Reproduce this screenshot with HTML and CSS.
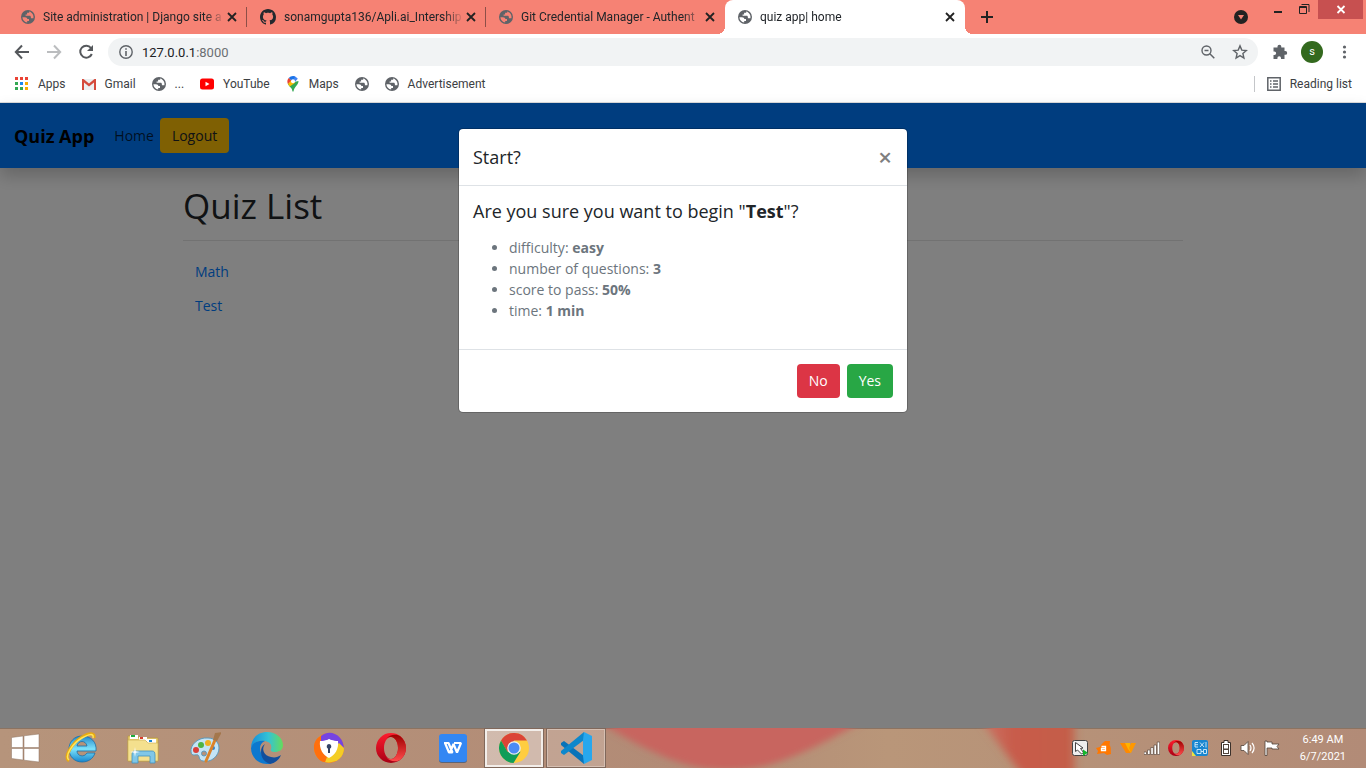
FILE: index.html
```html
<!DOCTYPE html>
<html lang="en">
<head>
<meta charset="utf-8">
<title>quiz app| home</title>
<link rel="stylesheet" href="styles.css">
</head>
<body>
<svg class="defs" aria-hidden="true">
  <symbol id="globe" viewBox="0 0 14 14">
    <path fill="#5f6368" fill-rule="evenodd" d="M7 0a7 7 0 1 0 0 14A7 7 0 0 0 7 0zM1.400 7.200h2.600c1.500 0 2.300.700 2.300 1.900h1.700V11H6.200v1.500C3.600 12.200 1.500 9.900 1.400 7.200zM8.200 1.500v1.300H6.100v1.700H4.600v1.300h4c.900 0 1.300.700 1.300 1.500v1h2.500C13.100 5.200 11 2.200 8.200 1.500z"/>
  </symbol>
  <symbol id="close" viewBox="0 0 14 14">
    <path d="M3 3l8 8M11 3l-8 8" fill="none" stroke="currentColor" stroke-width="1.800"/>
  </symbol>
  <symbol id="opera" viewBox="0 0 30 30">
    <defs>
      <linearGradient id="operaOuter" x1="0" x2="0" y1="0" y2="1"><stop offset="0" stop-color="#ff1b2d"/><stop offset="1" stop-color="#a70014"/></linearGradient>
      <linearGradient id="operaInner" x1="0" x2="0" y1="0" y2="1"><stop offset="0" stop-color="#9c0000"/><stop offset="1" stop-color="#ff4b4b"/></linearGradient>
    </defs>
    <path fill="url(#operaOuter)" fill-rule="evenodd" d="M15 0a15 15 0 1 0 0 30a15 15 0 0 0 0-30zM15 4c4 0 7 5 7 11s-3 11-7 11s-7-5-7-11s3-11 7-11z"/>
    <path fill="url(#operaInner)" d="M10 6c4-5 10-5 14-3c8 6 8 18 0 24c-4 2-10 2-14-3c2 2 4 2 5 2c4 0 7-5 7-11S19 4 15 4c-1 0-3 0-5 2z"/>
  </symbol>
</svg>

<header class="browser">
  <div class="tabstrip">
    <div class="tab">
      <svg class="icon14"><use href="#globe"/></svg>
      <span class="tab-title">Site administration | Django site a</span>
      <button class="tab-close" aria-label="Close tab"><svg class="icon14"><use href="#close"/></svg></button>
    </div>
    <div class="tab">
      <svg class="icon16" viewBox="0 0 16 16"><path fill="#24292e" d="M8 0C3.580 0 0 3.580 0 8c0 3.540 2.290 6.530 5.470 7.590.400.070.550-.170.550-.380 0-.190-.010-.820-.010-1.490-2.010.370-2.530-.490-2.690-.940-.090-.230-.480-.940-.820-1.130-.280-.150-.680-.520-.010-.530.630-.010 1.080.580 1.230.820.720 1.210 1.870.870 2.330.660.070-.520.280-.870.510-1.070-1.780-.200-3.640-.890-3.640-3.950 0-.870.310-1.590.820-2.150-.080-.200-.360-1.020.080-2.120 0 0 .670-.210 2.200.820.640-.180 1.320-.270 2-.270s1.360.090 2 .270c1.530-1.040 2.200-.820 2.200-.820.440 1.100.160 1.920.080 2.120.510.560.820 1.270.820 2.150 0 3.070-1.870 3.750-3.650 3.950.290.250.540.730.540 1.480 0 1.070-.010 1.930-.010 2.200 0 .210.150.460.550.380A8.010 8.010 0 0 0 16 8c0-4.420-3.580-8-8-8z"/></svg>
      <span class="tab-title">sonamgupta136/Apli.ai_Intership</span>
      <button class="tab-close" aria-label="Close tab"><svg class="icon14"><use href="#close"/></svg></button>
    </div>
    <div class="tab tab-last">
      <svg class="icon14"><use href="#globe"/></svg>
      <span class="tab-title">Git Credential Manager - Authent</span>
      <button class="tab-close" aria-label="Close tab"><svg class="icon14"><use href="#close"/></svg></button>
    </div>
    <div class="tab tab-active">
      <svg class="icon14"><use href="#globe"/></svg>
      <span class="tab-title">quiz app| home</span>
      <button class="tab-close" aria-label="Close tab"><svg class="icon14"><use href="#close"/></svg></button>
    </div>
    <button class="new-tab" aria-label="New tab"><svg class="icon14" viewBox="0 0 14 14"><path d="M7 1v12M1 7h12" stroke="#222" stroke-width="2"/></svg></button>
    <div class="window-controls">
      <button class="tab-search" aria-label="Search tabs"><svg class="icon14" viewBox="0 0 14 14"><circle cx="7" cy="7" r="7" fill="#222"/><path fill="#f68274" d="M4 5h6L7 9.500z"/></svg></button>
      <button class="win" aria-label="Minimize"><svg class="icon14" viewBox="0 0 14 14"><path fill="#222" d="M3 9h8v2H3z"/></svg></button>
      <button class="win" aria-label="Restore"><svg class="icon14" viewBox="0 0 14 14"><path fill="none" stroke="#222" d="M1.500 4.500h7v7h-7zM1 5.500h8M3.500 2.500h7.500V10"/></svg></button>
      <button class="win win-close" aria-label="Close"><svg class="icon14" viewBox="0 0 14 14"><path d="M3.500 4l7 7M10.500 4l-7 7" stroke="#fff" stroke-width="1.800"/></svg></button>
    </div>
  </div>

  <div class="toolbar">
    <button class="tool" aria-label="Back"><svg class="icon16" viewBox="0 0 16 16"><path d="M15 8H2M8 1.500L1.800 8L8 14.500" fill="none" stroke="#55585c" stroke-width="2"/></svg></button>
    <button class="tool" aria-label="Forward"><svg class="icon16" viewBox="0 0 16 16"><path d="M1 8h13M8 1.500L14.200 8L8 14.500" fill="none" stroke="#bbbdbf" stroke-width="2"/></svg></button>
    <button class="tool" aria-label="Reload"><svg class="icon16" viewBox="0 0 16 16"><path d="M13 4A6 6 0 1 0 13.800 10" fill="none" stroke="#55585c" stroke-width="2"/><path fill="#55585c" d="M15 1v6H9z"/></svg></button>
    <div class="address">
      <svg class="icon14" viewBox="0 0 14 14"><circle cx="7" cy="7" r="6.200" fill="none" stroke="#5f6368" stroke-width="1.400"/><path fill="#5f6368" d="M6.200 3.200h1.600v1.500H6.200zM6.200 6h1.600v5H6.200z"/></svg>
      <div class="url"><span class="url-host">127.0.0.1</span><span class="url-port">:8000</span></div>
      <button class="tool" aria-label="Zoom"><svg class="icon14" viewBox="0 0 14 14"><circle cx="5.500" cy="5.500" r="4.500" fill="none" stroke="#5f6368" stroke-width="1.400"/><path d="M3.500 5.500h4M8.800 8.800l4.500 4.500" stroke="#5f6368" stroke-width="1.500"/></svg></button>
      <button class="tool" aria-label="Bookmark this tab"><svg class="icon16" viewBox="0 0 16 16"><path fill="none" stroke="#5f6368" stroke-width="1.400" d="M8 1.900l1.800 4.200 4.500.400-3.400 3 1 4.500L8 11.600l-3.900 2.400 1-4.500-3.400-3 4.500-.400z"/></svg></button>
    </div>
    <button class="tool" aria-label="Extensions"><svg class="icon16" viewBox="0 0 16 16"><path fill="#5f6368" d="M1.500 3.500h4V2.600a1.900 1.900 0 0 1 3.800 0v.900h3.200V7h.800a1.900 1.900 0 0 1 0 3.800h-.800v4.200H9v-1a1.800 1.800 0 0 0-3.600 0v1H1.500v-4h.900a1.700 1.700 0 0 0 0-3.500h-.900z"/></svg></button>
    <button class="avatar" aria-label="Profile">s</button>
    <button class="tool" aria-label="Menu"><svg class="icon16" viewBox="0 0 16 16"><g fill="#5f6368"><circle cx="8.500" cy="3" r="1.600"/><circle cx="8.500" cy="8" r="1.600"/><circle cx="8.500" cy="13" r="1.600"/></g></svg></button>
  </div>

  <nav class="bookmarks" aria-label="Bookmarks">
    <a class="bookmark" href="#"><svg class="icon14" viewBox="0 0 14 14"><path fill="#ea4335" d="M0 0h3v3H0zM5 0h3v3H5zM10 0h3v3h-3z"/><path fill="#34a853" d="M0 5h3v3H0zM0 10h3v3H0z"/><path fill="#1a88f0" d="M5 5h3v3H5z"/><path fill="#f9ab00" d="M10 5h3v3h-3zM5 10h3v3H5zM10 10h3v3h-3z"/><path fill="#34a853" d="M5 10h3v3H5z"/></svg>Apps</a>
    <a class="bookmark" href="#"><svg class="icon14" viewBox="0 0 14 14"><path fill="#eceff1" d="M2 2h10v11H2z"/><path fill="#d54b3d" d="M0 2h1.500L7 6.500 12.500 2H14v11h-2V5.500L7 9.600 2 5.500V13H0z"/></svg>Gmail</a>
    <a class="bookmark" href="#"><svg class="icon14"><use href="#globe"/></svg>...</a>
    <a class="bookmark" href="#"><svg class="icon14" viewBox="0 0 14 14"><rect y="1.500" width="14" height="11" rx="2.500" fill="#f00"/><path fill="#fff" d="M5.500 4.700v4.600L9.500 7z"/></svg>YouTube</a>
    <a class="bookmark" href="#"><svg class="icon16 pin" viewBox="0 0 14 16"><path fill="#34a853" d="M1.700 7.500C3 11 6 11 6.500 15.500h1C8 11 12.500 9 12.500 5z"/><path fill="#4285f4" d="M7 0a5.700 5.700 0 0 1 4.800 2.700L7 8z"/><path fill="#1a73e8" d="M7 0a6 6 0 0 0-4.300 2l4 4L9 .400z"/><path fill="#ea4335" d="M2.700 2C1 4 1 6 2 8l4-3z"/><path fill="#fbbc04" d="M2 8l1.700 2.500L9.500 6.500 5 4.500z"/><circle cx="7" cy="5.300" r="2" fill="#fff"/></svg>Maps</a>
    <a class="bookmark" href="#" aria-label="Bookmark"><svg class="icon14"><use href="#globe"/></svg></a>
    <a class="bookmark" href="#"><svg class="icon14"><use href="#globe"/></svg>Advertisement</a>
    <button class="reading-list"><svg class="icon14" viewBox="0 0 14 14"><path fill="none" stroke="#5f6368" stroke-width="1.500" d="M.800.800h12.400v12.400H.800z"/><path stroke="#5f6368" stroke-width="1.400" d="M3 4h1.500M6 4h5M3 7h1.500M6 7h5M3 10h1.500M6 10h5"/></svg>Reading list</button>
  </nav>
</header>

<div class="page">
  <nav class="navbar">
    <a class="brand" href="#">Quiz App</a>
    <a class="nav-link" href="#">Home</a>
    <button class="btn btn-warning">Logout</button>
  </nav>
  <main class="container">
    <h1>Quiz List</h1>
    <hr>
    <button class="btn btn-link">Math</button>
    <button class="btn btn-link">Test</button>
  </main>

  <div class="backdrop">
    <section class="modal" role="dialog" aria-labelledby="modalTitle">
      <header class="modal-header">
        <h2 id="modalTitle">Start?</h2>
        <button class="modal-close" aria-label="Close">×</button>
      </header>
      <div class="modal-body">
        <h2>Are you sure you want to begin "<b>Test</b>"?</h2>
        <ul>
          <li>difficulty: <b>easy</b></li>
          <li>number of questions: <b>3</b></li>
          <li>score to pass: <b>50%</b></li>
          <li>time: <b>1 min</b></li>
        </ul>
      </div>
      <footer class="modal-footer">
        <button class="btn btn-danger">No</button>
        <button class="btn btn-success">Yes</button>
      </footer>
    </section>
  </div>
</div>

<footer class="taskbar">
  <svg class="wallpaper" viewBox="0 0 1366 40" preserveAspectRatio="none" aria-hidden="true">
    <defs>
      <filter id="soft" x="-10%" y="-50%" width="120%" height="200%"><feGaussianBlur stdDeviation="5 3"/></filter>
      <linearGradient id="petal" x1="0" x2="1"><stop offset="0" stop-color="#cc7a6c"/><stop offset=".4" stop-color="#c85c4b"/><stop offset="1" stop-color="#c45d47"/></linearGradient>
    </defs>
    <g filter="url(#soft)">
      <path fill="#c8655e" d="M586-14C650 26 685 42 728 42S805 26 876-14z"/>
      <path fill="url(#petal)" d="M972-20L1032 60H1074V-20z"/>
    </g>
  </svg>
  <button class="task task-start" aria-label="Start"><svg class="icon32" viewBox="0 0 32 32"><path fill="#fff" stroke="#8c7361" stroke-width=".500" d="M2.500 5.500L14 4v11.500H2.500zM15 3.800L30 2v13.500H15zM2.500 16.500H14V28L2.500 26.500zM15 16.500h15V30l-15-1.800z"/></svg></button>
  <button class="task" aria-label="Internet Explorer"><svg class="icon32" viewBox="0 0 32 32"><defs><linearGradient id="ie" x1="0" x2="0" y1="0" y2="1"><stop offset="0" stop-color="#2387c8"/><stop offset=".5" stop-color="#7de3fb"/><stop offset="1" stop-color="#1686ce"/></linearGradient></defs><path fill="url(#ie)" stroke="#1a6fa8" stroke-width=".800" fill-rule="evenodd" d="M17 4C9 4 4 10 4 17s5 13 13 13c6 0 11-3 13-9h-8c-3 5-10 3-10-2h19C32 10 26 4 17 4zM12 14c1-6 9-6 10 0z"/><path fill="none" stroke="#e9aa10" stroke-width="3" d="M4 29C-2 25 8 10 17 5C24 1 30 0 29 6"/><path fill="none" stroke="#ffe45a" stroke-width="1.500" d="M4 28C-1 24 8 11 17 6C24 2 29 1 28 6"/></svg></button>
  <button class="task" aria-label="File Explorer"><svg class="icon32" viewBox="0 0 32 32"><path fill="#e9cf6e" stroke="#b8993c" stroke-width=".700" d="M1 4h10l1 2h19v23H1z"/><path fill="#fff" d="M3 3h8v4H3zM12 5h8v4h-8zM20 7h9v4h-9z"/><path fill="#1dab3d" d="M4 3h4v2H4z"/><path fill="#d83c2c" d="M13 5h3v2h-3z"/><path fill="#1684d1" d="M22 8h3v2h-3z"/><path fill="#f4e08e" stroke="#c9ab4e" stroke-width=".600" d="M1 8h17l3 3h10v18H1z"/><path fill="#80c7e8" stroke="#4392be" stroke-width=".800" d="M5 31V23c0-3 1-4 3-4h17c2 0 3 1 3 4v8h-5v-7H11v7z"/><path fill="#fff" d="M8 15l.700 4.300L13 20l-4.300.700L8 25l-.700-4.300L3 20l4.300-.700z"/></svg></button>
  <button class="task" aria-label="Paint"><svg class="icon32" viewBox="0 0 32 32"><path fill="#c4e4f5" stroke="#5c9abd" d="M19 6C9 5 1 13 2 20c1 5 5 2 7 3s0 5 5 6c8 2 16-5 16-13 0-6-5-10-11-10zM15 19a2.500 2.500 0 1 1 0 5 2.500 2.500 0 0 1 0-5z"/><circle cx="12" cy="13" r="3" fill="#4eb343"/><circle cx="19" cy="11" r="3" fill="#efaf22"/><circle cx="7" cy="18" r="3" fill="#d83e37"/><circle cx="24" cy="16" r="2" fill="#3482c7"/><path stroke="#dc8228" stroke-width="3" stroke-linecap="round" d="M17 29L26 8"/><path fill="#a4774c" d="M24 8l2-7 7-1-5 9z"/></svg></button>
  <button class="task" aria-label="Microsoft Edge"><svg class="icon32" viewBox="0 0 32 32"><defs><linearGradient id="edgeA" x1="0" x2="1"><stop offset="0" stop-color="#168edb"/><stop offset=".55" stop-color="#35c3d4"/><stop offset="1" stop-color="#65dc5a"/></linearGradient></defs><path fill="url(#edgeA)" d="M0 16C0 6 7 0 16 0s16 6 16 13c0 5-4 7-8 7-3 0-5-1-4-3 1-3 0-7-6-8C8 8 2 11 0 16z"/><path fill="#0c78cf" d="M0 16c2-6 8-8 14-7-5 2-6 7-4 12 3 6 8 9 15 7-3 3-6 4-9 4C7 32 0 25 0 16z"/><path fill="#124f9d" d="M14 12c-4 5-1 12 6 13 4 1 7 0 10-2-2 5-6 8-11 9-6-2-9-7-9-12 0-4 1-6 4-8z"/></svg></button>
  <button class="task" aria-label="Avast Secure Browser"><svg class="icon32" viewBox="0 0 32 32"><circle cx="16" cy="16" r="15" fill="#ff8c12"/><path fill="#7544e2" d="M8 4c9-8 23-1 23 13l-5-5H8z"/><path fill="#f4cd25" d="M31 16c0 10-9 16-19 14l4-9 10-10z"/><path fill="#ff6f0d" d="M8 4C0 8-1 17 4 25c2 3 5 5 8 5l3-9-7-9z"/><path fill="#fff" d="M7 9c6 0 9-2 9-2s4 2 9 2c1 8-3 14-9 17-6-3-10-9-9-17z"/><path fill="#344365" d="M16 12a2.500 2.500 0 0 1 1 4.700V21h-2v-4.300A2.500 2.500 0 0 1 16 12z"/></svg></button>
  <button class="task" aria-label="Opera"><svg class="icon30"><use href="#opera"/></svg></button>
  <button class="task" aria-label="WPS Writer"><svg class="icon30" viewBox="0 0 30 30"><rect x="1" y="2" width="28" height="28" rx="3" fill="#5c6477"/><rect x="1" y="1" width="28" height="28" rx="3" fill="#3387f3"/><path fill="none" stroke="#fff" stroke-width="2.200" stroke-linejoin="bevel" d="M6 10h4.500l4 9.500h-3.500L7 10M12 19.500L15.500 11 19 19.500 23 10h-7"/></svg></button>
  <button class="task task-open" aria-label="Google Chrome"><svg class="icon30" viewBox="0 0 30 30"><circle cx="15" cy="15" r="15" fill="#ffcd40"/><path fill="#db4437" d="M2 7.500A15 15 0 0 1 28 7.500H15L8.500 19z"/><path fill="#0f9d58" d="M2 7.500L8.500 18.800 21.500 18.700 14.500 30A15 15 0 0 1 2 7.500z"/><circle cx="15" cy="15" r="6.800" fill="#eee"/><circle cx="15" cy="15" r="5.500" fill="#4c8bf5"/></svg></button>
  <button class="task task-open task-idle" aria-label="Visual Studio Code"><svg class="icon32" viewBox="0 0 32 32"><path fill="#0873b9" d="M1 11l3-2 20 15v8L1 13z"/><path fill="#0c87cc" d="M1 21l3 2L24 8V0L1 19z"/><path fill="#27a7ed" d="M24 0l8 4v24l-8 4-1-8V8z"/></svg></button>
  <div class="tray">
    <svg class="icon16" viewBox="0 0 16 16"><rect x=".500" y=".500" width="15" height="15" rx="2" fill="#eee" stroke="#444"/><path fill="#fff" stroke="#444" d="M3.500 2.500v9l2-1.500 4 4 2-1.500-3-4 2.500-.500z"/><path fill="#15b52a" d="M11 9.500l5 3.200-5 3.200z"/></svg>
    <svg class="icon16" viewBox="0 0 16 16"><path fill="#ff7800" d="M9 1l5 0-.500 4c2 3 1 5 1.500 9l-4 1-3-2-7 1 1-3-2-3 4-1c1-3 3-4 5-6z"/><path fill="none" stroke="#fff" stroke-width="1.300" d="M5.500 6.500h4v4h-4v-2h4"/></svg>
    <svg class="icon16" viewBox="0 0 16 16"><path fill="#ff8a00" d="M0 3h6l5 10H6z"/><path fill="#ffb300" d="M5 3h5l1 10-3-4z"/><path fill="#ff9800" d="M11 3h5l-5 10-2-5z"/></svg>
    <svg class="icon16" viewBox="0 0 16 16"><path fill="#fff" stroke="#604d42" stroke-width=".700" d="M0 12h2.500v2.500H0zM3.500 10H6v4.500H3.500zM6.800 7.500h2.500v7H6.800zM10 5h2.500v9.500H10zM13.200 2h2.500v12.500h-2.500z"/></svg>
    <svg class="icon16"><use href="#opera"/></svg>
    <svg class="icon16 tray-gap" viewBox="0 0 16 16"><rect width="16" height="16" rx="2" fill="#1786d0"/><path fill="#eee23e" d="M0 11l4 5H0z"/><path fill="none" stroke="#d5edfc" stroke-width=".900" d="M6 2.500H3v4.500h3M3 4.700h3M8 2.500l4 4.500M12 2.500L8 7M14 2v5.500M5 9.500h4v4H5zM9 11.500h2M11.500 9.500h3v4h-3z"/></svg>
    <svg class="tray-battery" viewBox="2 0 12 16"><path fill="#fff" stroke="#3b312b" d="M6 .500h4v2h2.500v13h-9v-13H6z"/><path fill="#51443b" d="M5 4h6v10H5z"/><path fill="#fff" d="M6 5h4v3.500H6zM6 10h4v3H6z"/></svg>
    <svg class="icon16" viewBox="0 0 16 16"><path fill="#fff" stroke="#51443b" stroke-width=".800" d="M1 5.500h3L8 1.500v13l-4-4H1z"/><path fill="none" stroke="#fff" stroke-width="1.200" d="M10 5c1.300 2 1.300 4 0 6M12 3c2.500 3 2.500 7 0 10"/></svg>
    <svg class="icon16" viewBox="0 0 16 16"><path fill="#fff" stroke="#51443b" stroke-width=".800" d="M1 1h2v1h5v2h7l-2 2.500 2 2.500H8V8H3v7.500H1z"/></svg>
    <time class="clock"><span>6:49 AM</span><span>6/7/2021</span></time>
  </div>
</footer>
</body>
</html>
```
FILE: styles.css
```css
* { box-sizing: border-box; }

body {
  margin: 0;
  height: 100vh;
  overflow: hidden;
  display: flex;
  flex-direction: column;
  font-family: "Open Sans", "Noto Sans", sans-serif;
  font-size: 14px;
  color: #212529;
}

button {
  font: inherit;
  color: inherit;
  border: 0;
  padding: 0;
  background: none;
}

a { color: inherit; text-decoration: none; }
b { font-weight: 700; }
svg { flex: none; display: block; }
.defs { position: absolute; width: 0; height: 0; }
.icon14 { width: 14px; height: 14px; }
.icon16 { width: 16px; height: 16px; }
.icon30 { width: 30px; height: 30px; }
.icon32 { width: 32px; height: 32px; }

/* Browser chrome */
.browser {
  flex: none;
  background: #fff;
  border-bottom: 1px solid #dcdcdc;
  font-family: Roboto, sans-serif;
  font-size: 12px;
}

.tabstrip {
  display: flex;
  height: 34px;
  padding-left: 8px;
  background: #f68274;
}

.tab {
  flex: 0 1 239px;
  min-width: 0;
  display: flex;
  align-items: center;
  gap: 8px;
  padding: 0 8px 0 13px;
  background: linear-gradient(#8d4f48, #8d4f48) right center / 1px 20px no-repeat;
}

.tab-last { background: none; }
.tab-title {
  flex: 1;
  min-width: 0;
  overflow: hidden;
  white-space: nowrap;
  mask-image: linear-gradient(to right, #000 calc(100% - 20px), transparent);
}
.tab-close { margin-left: -8px; color: #222; }

.tab-active {
  position: relative;
  flex-basis: 240px;
  background: #fff;
  border-radius: 8px 8px 0 0;
}
.tab-active::before,
.tab-active::after {
  content: "";
  position: absolute;
  bottom: 0;
  width: 8px;
  height: 8px;
}
.tab-active::before { right: 100%; background: radial-gradient(circle at 0 0, transparent 8px, #fff 8px); }
.tab-active::after { left: 100%; background: radial-gradient(circle at 100% 0, transparent 8px, #fff 8px); }

.new-tab { padding: 0 15px; }

.window-controls { display: flex; align-items: flex-start; margin-left: auto; padding-right: 3px; }
.tab-search { align-self: center; margin-right: 16px; }
.win { display: flex; justify-content: center; width: 27px; height: 19px; padding-top: 2px; }
.win-close { width: 45px; background: #c75050; }

.toolbar {
  display: flex;
  align-items: center;
  gap: 16px;
  height: 36px;
  padding: 0 14px;
}

.address {
  flex: 1;
  display: flex;
  align-items: center;
  gap: 9px;
  height: 28px;
  padding: 0 10px 0 11px;
  margin: 0 -2px;
  border-radius: 14px;
  background: #f1f3f4;
  font-size: 13px;
}
.url { flex: 1; }
.url-host { color: #202124; }
.url-port { color: #6b6f73; }
.address .tool + .tool { margin-left: 8px; }

.avatar {
  width: 22px;
  height: 22px;
  margin: 0 -3px;
  border-radius: 50%;
  background: #33691e;
  color: #fff;
  font-size: 11px;
  line-height: 20px;
}

.bookmarks {
  display: flex;
  align-items: center;
  gap: 16px;
  height: 32px;
  padding: 0 14px 4px 15px;
  color: #3c4043;
}
.bookmark { display: flex; align-items: center; gap: 9px; }
.pin { width: 14px; }
.reading-list {
  display: flex;
  align-items: center;
  gap: 9px;
  height: 16px;
  margin-left: auto;
  padding-left: 12px;
  border-left: 1px solid #c4c6c9;
}

/* Page */
.page { position: relative; flex: 1; min-height: 0; background: #fff; }

.navbar {
  display: flex;
  align-items: center;
  padding: 15px 14px;
  background: #007bff;
  box-shadow: 0 8px 16px rgba(0, 0, 0, .2);
}
.brand { margin-right: 20px; font-size: 18px; font-weight: 700; color: #000; }
.nav-link { margin-right: 6px; color: rgba(0, 0, 0, .75); }

.btn {
  min-height: 34px;
  padding: 0 12px;
  border-radius: 4px;
  line-height: 34px;
}
.btn-warning { background: #ffc107; line-height: 35px; }
.btn-danger { background: #dc3545; color: #fff; }
.btn-success { background: #28a745; color: #fff; }
.btn-link { display: block; color: #007bff; }

.container { max-width: 1026px; margin: 0 auto; padding: 16px 13px; }
h1 { margin: 0; font-size: 35px; line-height: 44px; font-weight: 500; }
hr { margin: 12px 0 14px; border: 0; border-top: 1px solid rgba(0, 0, 0, .1); }
h2 { margin: 0; font-size: 18px; line-height: 22px; font-weight: 500; }

.backdrop { position: absolute; inset: 0; background: rgba(0, 0, 0, .5); }

.modal {
  width: 450px;
  max-width: 100%;
  margin: 25px auto;
  border: 1px solid rgba(0, 0, 0, .2);
  border-radius: 5px;
  background: #fff;
  background-clip: padding-box;
}
.modal-header {
  display: flex;
  justify-content: space-between;
  padding: 17px 14px;
  border-bottom: 1px solid #dee2e6;
}
.modal-close { padding: 0 1px; font-size: 24px; line-height: 20px; font-weight: 600; color: #7f7f7f; }
.modal-body { padding: 14px 14px 28px; }
.modal-body ul { margin: 15px 0 0; padding-left: 36px; line-height: 21px; color: #6c757d; }
.modal-footer {
  display: flex;
  justify-content: flex-end;
  gap: 7px;
  padding: 14px;
  border-top: 1px solid #dee2e6;
}

/* Taskbar */
.taskbar {
  position: relative;
  flex: none;
  display: flex;
  height: 40px;
  padding-left: 8px;
  background: linear-gradient(90deg, #b6947b, #b28b76 50%, #b99679 65%, #b28b77);
  box-shadow: inset 0 1px #8c7361;
}
.wallpaper { position: absolute; inset: 0; width: 100%; height: 100%; }
.task {
  position: relative;
  flex: 0 1 62px;
  min-width: 32px;
  display: flex;
  align-items: center;
  justify-content: center;
}
.task-start { flex-basis: 42px; padding-right: 8px; }
.task-open {
  flex-basis: 60px;
  margin-right: 2px;
  border: 1px solid #80685b;
  outline: 2px solid #f3eeea;
  outline-offset: -3px;
  background: rgba(255, 255, 255, .4);
}
.task-idle { outline: 1px solid #d5bfb2; outline-offset: -2px; background: rgba(255, 255, 255, .2); }

.tray {
  position: relative;
  display: flex;
  align-items: center;
  gap: 8px;
  margin-left: auto;
  padding-right: 20px;
}
.tray-gap { margin-right: 4px; }
.tray-battery { width: 12px; height: 16px; }
.clock {
  display: flex;
  flex-direction: column;
  align-items: center;
  margin-left: 12px;
  font-family: Roboto, sans-serif;
  font-size: 11px;
  line-height: 17px;
  color: #fff;
}
```
